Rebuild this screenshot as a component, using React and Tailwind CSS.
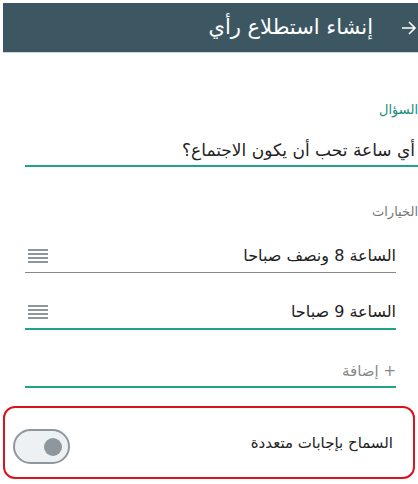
export default function App() {
  const font = { fontFamily: '"DejaVu Sans", "Noto Sans", sans-serif' };
  return (
    <div dir="rtl" className="w-[418px] h-[484px] bg-white overflow-hidden pt-[3px] pl-[3px]" style={font}>
      {/* toolbar */}
      <div className="h-[50px] bg-[#3d5762] border-b border-[#c9d6de] flex items-center pr-[1px]">
        <svg width="16" height="16" viewBox="0 0 16 16" className="ml-[28px]">
          <path d="M1 8h13M8 2l6 6-6 6" fill="none" stroke="#fff" strokeWidth="1.6" />
        </svg>
        <h1 className="text-white text-[21px] leading-none">إنشاء استطلاع رأي</h1>
      </div>

      {/* question */}
      <div className="mt-[48px] text-[#128c7e] text-[13px] leading-[18px]">السؤال</div>
      <div className="mt-[20px] ml-[22px] pr-[3px] border-b-2 border-[#1fa38a] pb-[4px] text-[#222] text-[17px] leading-[22px]">
        أي ساعة تحب أن يكون الاجتماع؟
      </div>

      {/* options */}
      <div className="mt-[36px] text-[#777] text-[13px] leading-[18px]">الخيارات</div>
      <div className="mr-[22px] ml-[22px]">
        <Option text="الساعة 8 ونصف صباحا" active={false} className="mt-[24px]" />
        <Option text="الساعة 9 صباحا" active className="mt-[28px]" />
        <div className="mt-[31px] border-b-2 border-[#1fa38a] pb-[5px] text-[#888] text-[15px] leading-[20px]">
          + إضافة
        </div>
      </div>

      {/* multiple answers */}
      <div className="mt-[18px] mr-[3px] w-[412px] h-[73px] border-2 border-[#d9141c] rounded-[12px] flex items-center justify-between pr-[20px] pl-[8px]">
        <span className="text-[#222] text-[15px] leading-[20px]">السماح بإجابات متعددة</span>
        <div className="mt-[8px] w-[57px] h-[35px] rounded-full bg-[#eef1f4] border-2 border-[#8e979d] flex items-center justify-start pr-[6px]">
          <div className="w-[18px] h-[18px] rounded-full bg-[#8e979d]" />
        </div>
      </div>
    </div>
  );
}

function Option({ text, active, className }) {
  return (
    <div
      className={
        "flex items-center justify-between pb-[5px] text-[#222] text-[16px] leading-[22px] " +
        (active ? "border-b-2 border-[#1fa38a] " : "border-b border-[#888] ") +
        className
      }
    >
      <span>{text}</span>
      <div className="w-[20px] flex flex-col gap-[2.5px] ml-[3px]">
        <div className="h-[1.5px] bg-[#8c979d]" />
        <div className="h-[1.5px] bg-[#8c979d]" />
        <div className="h-[1.5px] bg-[#8c979d]" />
        <div className="h-[1.5px] bg-[#8c979d]" />
      </div>
    </div>
  );
}
